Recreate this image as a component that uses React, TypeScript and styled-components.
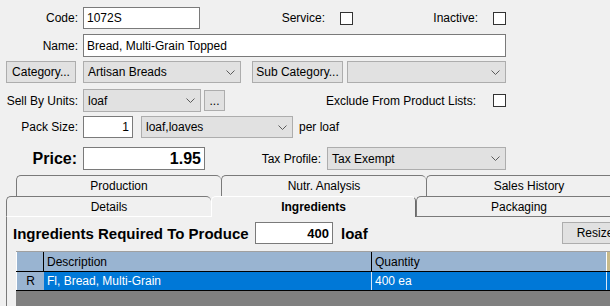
import React from "react";
import styled, { createGlobalStyle } from "styled-components";

const GlobalStyle = createGlobalStyle`
    html, body {
        margin: 0;
        padding: 0;
        background: #f0f0f0;
        overflow: hidden;
    }

    body {
        font-family: "Liberation Sans", Arial, sans-serif;
        font-size: 12px;
        color: #000;
    }
`;

const Screen = styled.div`
    width: 610px;
    height: 306px;
    overflow: hidden;
    background: #f0f0f0;
`;

const Window = styled.div`
    width: 640px;
    height: 306px;
    display: flex;
    flex-direction: column;
`;

const Row = styled.div<{ $top: number; $h?: number; $pl?: number }>`
    display: flex;
    align-items: center;
    flex: none;
    margin-top: ${(p) => p.$top}px;
    height: ${(p) => p.$h ?? 22}px;
    padding-left: ${(p) => p.$pl ?? 0}px;
`;

const Label = styled.span<{ $w: number; $big?: boolean }>`
    flex: none;
    width: ${(p) => p.$w}px;
    text-align: right;
    white-space: nowrap;
    font-size: ${(p) => (p.$big ? 16 : 12)}px;
    font-weight: ${(p) => (p.$big ? 700 : 400)};
`;

const TextBox = styled.input<{
    $w: number;
    $ml?: number;
    $right?: boolean;
    $size?: number;
    $bold?: boolean;
}>`
    flex: none;
    box-sizing: border-box;
    width: ${(p) => p.$w}px;
    height: 100%;
    margin: 0 0 0 ${(p) => p.$ml ?? 5}px;
    padding: 0 3px;
    background: #fff;
    border: 1px solid #7a7a7a;
    border-radius: 0;
    outline: none;
    font-family: "Liberation Sans", Arial, sans-serif;
    font-size: ${(p) => p.$size ?? 12}px;
    font-weight: ${(p) => (p.$bold ? 700 : 400)};
    color: #000;
    text-align: ${(p) => (p.$right ? "right" : "left")};
`;

const Combo = styled.div<{ $w: number; $ml: number }>`
    flex: none;
    box-sizing: border-box;
    width: ${(p) => p.$w}px;
    height: 100%;
    margin-left: ${(p) => p.$ml}px;
    padding: 0 5px 0 4px;
    display: flex;
    align-items: center;
    justify-content: space-between;
    background: #e1e1e1;
    border: 1px solid #adadad;
    white-space: nowrap;

    svg {
        flex: none;
    }
`;

const Button = styled.button<{ $w: number; $ml: number; $h?: number }>`
    flex: none;
    box-sizing: border-box;
    width: ${(p) => p.$w}px;
    height: ${(p) => (p.$h ? `${p.$h}px` : "100%")};
    margin: 0 0 0 ${(p) => p.$ml}px;
    padding: 0;
    background: #e1e1e1;
    border: 1px solid #adadad;
    border-radius: 0;
    font-family: "Liberation Sans", Arial, sans-serif;
    font-size: 12px;
    color: #000;
    white-space: nowrap;
`;

const CheckBox = styled.span<{ $ml: number }>`
    flex: none;
    box-sizing: border-box;
    width: 13px;
    height: 13px;
    margin-left: ${(p) => p.$ml}px;
    background: #fff;
    border: 1px solid #333;
`;

const Plain = styled.span<{ $ml: number }>`
    flex: none;
    margin-left: ${(p) => p.$ml}px;
    white-space: nowrap;
`;

const TabStrip = styled.div<{ $top: number; $h: number; $pl: number }>`
    display: flex;
    flex: none;
    margin-top: ${(p) => p.$top}px;
    height: ${(p) => p.$h}px;
    padding-left: ${(p) => p.$pl}px;
`;

const Tab = styled.div<{ $active?: boolean; $bottom?: string }>`
    flex: none;
    box-sizing: border-box;
    width: 205px;
    height: 100%;
    display: flex;
    align-items: center;
    justify-content: center;
    background: #f0f0f0;
    border-top: 1px solid ${(p) => (p.$active ? "#fff" : "#7a7a7a")};
    border-left: 1px solid ${(p) => (p.$active ? "#fff" : "#7a7a7a")};
    border-right: ${(p) => (p.$active ? "1px solid #6a6a6a" : "none")};
    border-bottom: ${(p) => (p.$bottom ? `1px solid ${p.$bottom}` : "none")};
    border-radius: 5px 5px 0 0;
    font-weight: ${(p) => (p.$active ? 700 : 400)};
    white-space: nowrap;
`;

const Panel = styled.div`
    flex: 1;
    min-height: 0;
    display: flex;
    flex-direction: column;
    margin-left: 6px;
    padding-right: 12px;
    border-left: 1px solid #7a7a7a;
`;

const PanelTitle = styled.span`
    flex: none;
    width: 242px;
    font-size: 15px;
    font-weight: 700;
    white-space: nowrap;
`;

const Unit = styled.span`
    flex: 1;
    margin-left: 8px;
    font-size: 15px;
    font-weight: 700;
`;

const Grid = styled.div`
    flex: 1;
    display: flex;
    flex-direction: column;
    margin: 7px 0 0 9px;
    background: #808080;
    border-top: 1px solid #a0a0a0;
`;

const GridRow = styled.div<{ $h: number }>`
    display: flex;
    flex: none;
    height: ${(p) => p.$h}px;
    border-bottom: 1px solid #000;
`;

const Cell = styled.div<{
    $w?: number;
    $bg: string;
    $color?: string;
    $line?: string;
    $center?: boolean;
}>`
    flex: ${(p) => (p.$w ? "none" : "1")};
    box-sizing: border-box;
    width: ${(p) => (p.$w ? `${p.$w}px` : "auto")};
    display: flex;
    align-items: center;
    justify-content: ${(p) => (p.$center ? "center" : "flex-start")};
    padding-left: ${(p) => (p.$center ? 0 : 3)}px;
    background: ${(p) => p.$bg};
    color: ${(p) => p.$color ?? "#000"};
    border-right: ${(p) => (p.$line ? `1px solid ${p.$line}` : "none")};
    white-space: nowrap;
`;

const RowHead = styled(Cell)`
    border-left: 1px solid #fff;
`;

const Chevron = () => (
    <svg width="9" height="5" viewBox="0 0 9 5">
        <polyline
            points="0.5,0.5 4.5,4.5 8.5,0.5"
            fill="none"
            stroke="#5a5a5a"
            strokeWidth="1"
        />
    </svg>
);

const HEAD = "#99b4d1";
const SELECTED = "#0078d7";

const App: React.FC = () => {
    return (
        <Screen>
            <GlobalStyle />
            <Window>
                <Row $top={7}>
                    <Label $w={78}>Code:</Label>
                    <TextBox $w={117} readOnly value="1072S" />
                    <Label $w={125}>Service:</Label>
                    <CheckBox $ml={15} />
                    <Label $w={125}>Inactive:</Label>
                    <CheckBox $ml={15} />
                </Row>

                <Row $top={5} $h={23}>
                    <Label $w={78}>Name:</Label>
                    <TextBox $w={423} readOnly value="Bread, Multi-Grain Topped" />
                </Row>

                <Row $top={4}>
                    <Button $w={70} $ml={6}>Category...</Button>
                    <Combo $w={158} $ml={7}>
                        <span>Artisan Breads</span>
                        <Chevron />
                    </Combo>
                    <Button $w={91} $ml={11}>Sub Category...</Button>
                    <Combo $w={159} $ml={4}>
                        <span />
                        <Chevron />
                    </Combo>
                </Row>

                <Row $top={6} $h={23}>
                    <Label $w={78}>Sell By Units:</Label>
                    <Combo $w={118} $ml={5}>
                        <span>loaf</span>
                        <Chevron />
                    </Combo>
                    <Button $w={21} $ml={3} $h={21}>...</Button>
                    <Label $w={251}>Exclude From Product Lists:</Label>
                    <CheckBox $ml={17} />
                </Row>

                <Row $top={4}>
                    <Label $w={78}>Pack Size:</Label>
                    <TextBox $w={50} $right readOnly value="1" />
                    <Combo $w={152} $ml={8}>
                        <span>loaf,loaves</span>
                        <Chevron />
                    </Combo>
                    <Plain $ml={6}>per loaf</Plain>
                </Row>

                <Row $top={9} $h={23}>
                    <Label $w={77} $big>Price:</Label>
                    <TextBox
                        $w={122}
                        $ml={6}
                        $right
                        $size={16}
                        $bold
                        readOnly
                        value="1.95"
                    />
                    <Label $w={116}>Tax Profile:</Label>
                    <Combo $w={179} $ml={6}>
                        <span>Tax Exempt</span>
                        <Chevron />
                    </Combo>
                </Row>

                <TabStrip $top={5} $h={21} $pl={16}>
                    <Tab>Production</Tab>
                    <Tab>Nutr. Analysis</Tab>
                    <Tab>Sales History</Tab>
                </TabStrip>
                <TabStrip $top={0} $h={21} $pl={6}>
                    <Tab $bottom="#fff">Details</Tab>
                    <Tab $active>Ingredients</Tab>
                    <Tab $bottom="#7a7a7a">Packaging</Tab>
                </TabStrip>

                <Panel>
                    <Row $top={5} $pl={6}>
                        <PanelTitle>Ingredients Required To Produce</PanelTitle>
                        <TextBox
                            $w={78}
                            $ml={0}
                            $right
                            $size={13}
                            $bold
                            readOnly
                            value="400"
                        />
                        <Unit>loaf</Unit>
                        <Button $w={66} $ml={0}>Resize</Button>
                    </Row>

                    <Grid>
                        <GridRow $h={19}>
                            <RowHead $w={28} $bg={HEAD} $line="#000" />
                            <Cell $w={328} $bg={HEAD} $line="#000">
                                Description
                            </Cell>
                            <Cell $w={235} $bg={HEAD} $line="#fff">
                                Quantity
                            </Cell>
                            <Cell $bg="#c8bb8a" />
                        </GridRow>
                        <GridRow $h={18}>
                            <RowHead $w={28} $bg={HEAD} $center>
                                R
                            </RowHead>
                            <Cell $w={328} $bg={SELECTED} $color="#fff" $line="#d8e6f5">
                                Fl, Bread, Multi-Grain
                            </Cell>
                            <Cell $w={235} $bg={SELECTED} $color="#fff" $line="#d8e6f5">
                                400 ea
                            </Cell>
                            <Cell $bg={SELECTED} />
                        </GridRow>
                    </Grid>
                </Panel>
            </Window>
        </Screen>
    );
};

export default App;
